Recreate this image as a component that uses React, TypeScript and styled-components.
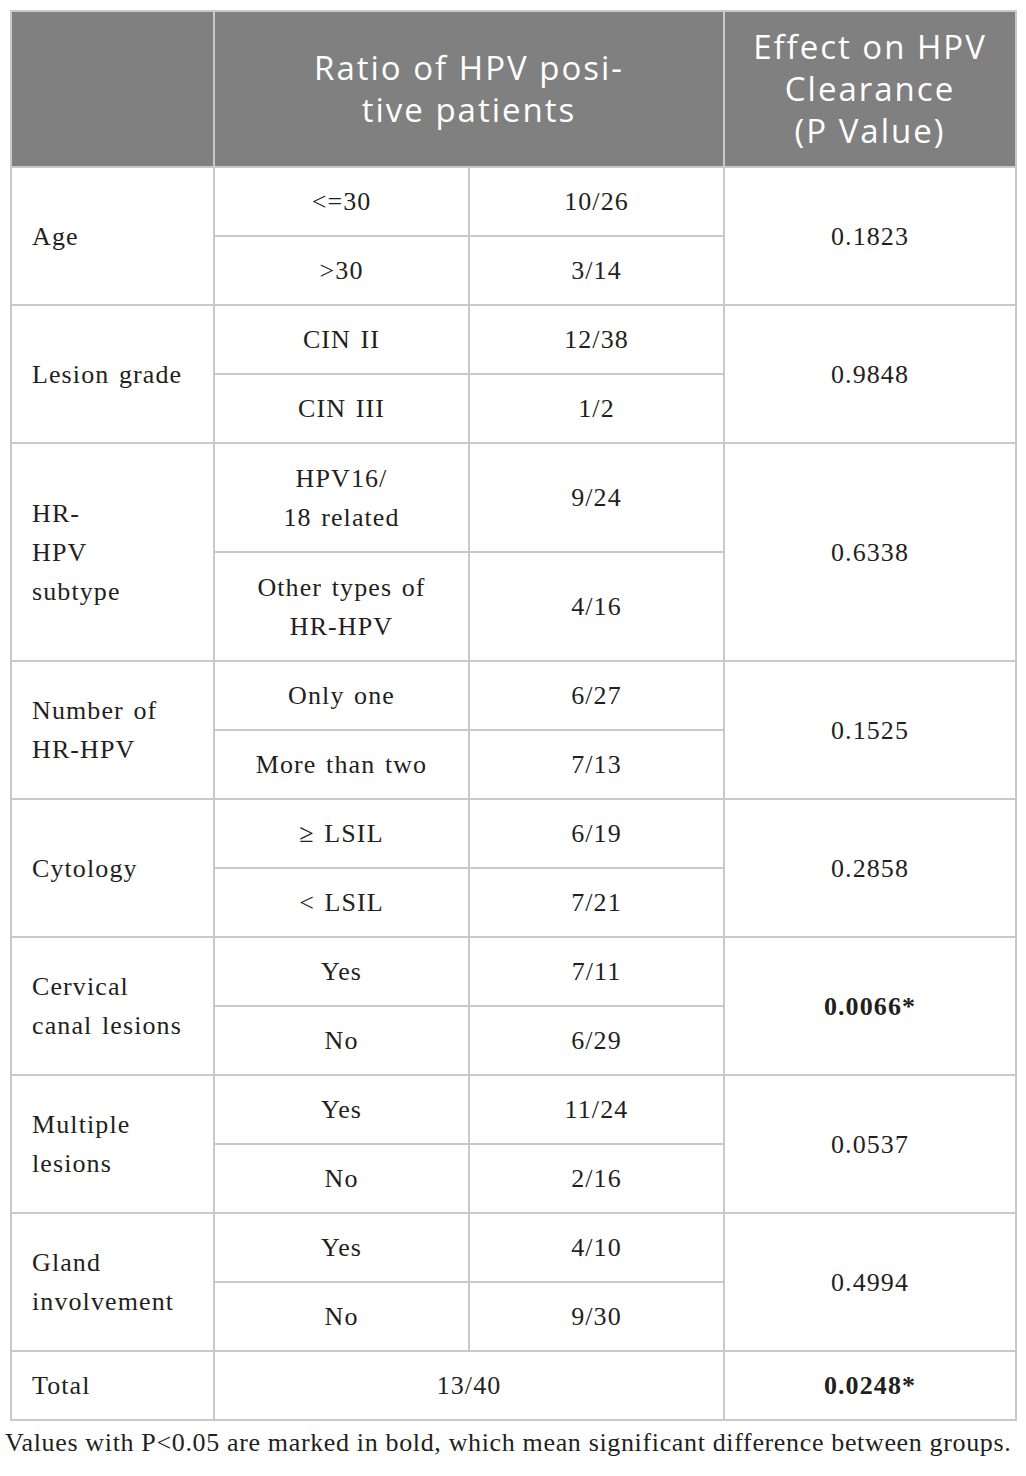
import React from "react";
import styled, { createGlobalStyle } from "styled-components";

const Global = createGlobalStyle`
  html, body { margin: 0; padding: 0; background: #ffffff; }
  body { font-family: "Liberation Serif", "Times New Roman", serif; color: #231f20; }
`;

const Page = styled.div`
  width: 1026px;
  padding: 10px 0 0 0;
  box-sizing: border-box;
`;

const Table = styled.table`
  margin-left: 10px;
  width: 1005px;
  border-collapse: collapse;
  table-layout: fixed;
`;

const Col = styled.col<{ $w: number }>`
  width: ${(p) => p.$w}px;
`;

const HeadCell = styled.th`
  height: 154px;
  background: #808080;
  color: #ffffff;
  border: 2px solid #c9c9c9;
  font-family: "Open Sans", Lato, sans-serif;
  font-weight: 400;
  font-size: 33px;
  line-height: 42px;
  letter-spacing: 2px;
  text-align: center;
  vertical-align: middle;
  padding: 0 2px;
`;

const Cell = styled.td<{ $left?: boolean; $h?: number; $bold?: boolean }>`
  height: ${(p) => p.$h ?? 69}px;
  border: 2px solid #c9c9c9;
  font-size: 26px;
  line-height: 39px;
  letter-spacing: 1.1px;
  word-spacing: 2px;
  text-align: ${(p) => (p.$left ? "left" : "center")};
  vertical-align: middle;
  padding: ${(p) => (p.$left ? "0 6px 0 20px" : "0 6px")};
  font-weight: ${(p) => (p.$bold ? 700 : 400)};
  box-sizing: border-box;
`;

const Note = styled.p`
  margin: 7px 0 0 5px;
  font-size: 26px;
  line-height: 30px;
  letter-spacing: 0.65px;
  white-space: nowrap;
`;

type Sub = { label: React.ReactNode; ratio: string };
type Group = { name: React.ReactNode; subs: [Sub, Sub]; p: string; bold?: boolean; h?: number };

const groups: Group[] = [
  { name: "Age", subs: [{ label: "<=30", ratio: "10/26" }, { label: ">30", ratio: "3/14" }], p: "0.1823" },
  { name: "Lesion grade", subs: [{ label: "CIN II", ratio: "12/38" }, { label: "CIN III", ratio: "1/2" }], p: "0.9848" },
  {
    name: (
      <>
        HR-
        <br />
        HPV
        <br />
        subtype
      </>
    ),
    subs: [
      { label: (<>HPV16/<br />18 related</>), ratio: "9/24" },
      { label: (<>Other types of<br />HR-HPV</>), ratio: "4/16" },
    ],
    p: "0.6338",
    h: 109,
  },
  { name: (<>Number of<br />HR-HPV</>), subs: [{ label: "Only one", ratio: "6/27" }, { label: "More than two", ratio: "7/13" }], p: "0.1525" },
  { name: "Cytology", subs: [{ label: "\u2265 LSIL", ratio: "6/19" }, { label: "< LSIL", ratio: "7/21" }], p: "0.2858" },
  { name: (<>Cervical<br />canal lesions</>), subs: [{ label: "Yes", ratio: "7/11" }, { label: "No", ratio: "6/29" }], p: "0.0066*", bold: true },
  { name: (<>Multiple<br />lesions</>), subs: [{ label: "Yes", ratio: "11/24" }, { label: "No", ratio: "2/16" }], p: "0.0537" },
  { name: (<>Gland<br />involvement</>), subs: [{ label: "Yes", ratio: "4/10" }, { label: "No", ratio: "9/30" }], p: "0.4994" },
];

export default function App() {
  return (
    <Page>
      <Global />
      <Table>
        <colgroup>
          <Col $w={203} />
          <Col $w={255} />
          <Col $w={255} />
          <Col $w={292} />
        </colgroup>
        <thead>
          <tr>
            <HeadCell />
            <HeadCell colSpan={2}>
              Ratio of HPV posi-
              <br />
              tive patients
            </HeadCell>
            <HeadCell>
              Effect on HPV
              <br />
              Clearance
              <br />
              (P Value)
            </HeadCell>
          </tr>
        </thead>
        <tbody>
          {groups.map((g, i) => (
            <React.Fragment key={i}>
              <tr>
                <Cell $left rowSpan={2}>
                  {g.name}
                </Cell>
                <Cell $h={g.h}>{g.subs[0].label}</Cell>
                <Cell $h={g.h}>{g.subs[0].ratio}</Cell>
                <Cell rowSpan={2} $bold={g.bold}>
                  {g.p}
                </Cell>
              </tr>
              <tr>
                <Cell $h={g.h}>{g.subs[1].label}</Cell>
                <Cell $h={g.h}>{g.subs[1].ratio}</Cell>
              </tr>
            </React.Fragment>
          ))}
          <tr>
            <Cell $left>Total</Cell>
            <Cell colSpan={2}>13/40</Cell>
            <Cell $bold>0.0248*</Cell>
          </tr>
        </tbody>
      </Table>
      <Note>Values with P&lt;0.05 are marked in bold, which mean significant difference between groups.</Note>
    </Page>
  );
}
